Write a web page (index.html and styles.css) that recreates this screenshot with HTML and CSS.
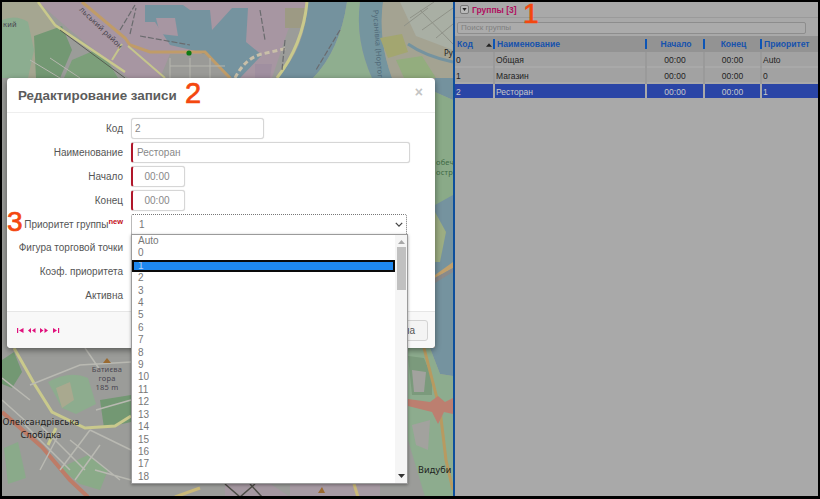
FILE: index.html
```html
<!DOCTYPE html>
<html lang="ru">
<head>
<meta charset="utf-8">
<title>Группы</title>
<link rel="stylesheet" href="styles.css">
</head>
<body>
<div class="frame">
  <div class="map">
    <svg class="map-art" viewBox="2 2 451 495" xmlns="http://www.w3.org/2000/svg">
      <rect x="2" y="2" width="451" height="495" fill="#9b9c99"/>
      <!-- top left -->
      <path d="M2 2H38L60 30L40 78H2Z" fill="#a5a691"/>
      <path d="M2 20Q16 14 28 22L34 50L28 78H2Z" fill="#8cad90"/>
      <path d="M34 36L62 26L72 50L60 78H36Z" fill="#739873"/>
      <path d="M72 60L100 48L118 78H64Z" fill="#7c9f7a"/>
      <path d="M38 2H132L125 30L230 78H128L70 30Z" fill="#a796a2"/>
      <path d="M78 2H310L288 30L272 78H205L150 52L128 45Z" fill="#a796a2"/>
      <path d="M145 5H183L190 10H210L212 30L232 8H248L246 42L262 55L240 78H232L200 52L170 45L155 22H145Z" fill="#75939f"/>
      <path d="M156 18H175L178 36L160 34Z" fill="#a796a2"/>
      <path d="M170 54H205L232 78H160Z" fill="#9a9a97"/>
      <path d="M285 8H305V28H285Z" fill="#9d9a84"/>
      <!-- river -->
      <path d="M308 2H347Q340 50 313 78H277Q305 50 308 2Z" fill="#74929e"/>
      <path d="M347 2H360Q355 40 372 78H313Q340 50 347 2Z" fill="#8fae8f"/>
      <path d="M360 2H383Q378 40 392 78H372Q355 40 360 2Z" fill="#75959f"/>
      <path d="M383 2H453V78H392Q378 40 383 2Z" fill="#a4a392"/>
      <path d="M400 2H453V50L416 36Z" fill="#a9afa4"/>
      <path d="M380 38L402 34L408 52L388 58Z" fill="#a3a670"/>
      <path d="M396 60L422 56L436 78H404Z" fill="#93ad7e"/>
      <path d="M408 44Q425 56 453 62" fill="none" stroke="#75939f" stroke-width="3"/>
      <path d="M420 10L453 44M410 18L434 2M422 30L453 8M436 38L453 24M404 26L428 8" stroke="#8f9288" stroke-width="1" fill="none"/>
      <path d="M307 2Q303 44 277 78" stroke="#c9c98c" stroke-width="3" fill="none"/>
      <path d="M235 78Q245 58 262 54L288 48" stroke="#c9bfa8" stroke-width="3" stroke-dasharray="5 3" fill="none"/>
      <path d="M255 64H272L270 78H255Z" fill="#a08fa0"/>
      <path d="M82 2L125 38L130 45L150 52H205L230 78" stroke="#c09c68" stroke-width="3" fill="none"/>
      <path d="M38 2L55 25L125 72" stroke="#c9c98c" stroke-width="2.5" fill="none"/>
      <path d="M122 44L112 60M128 46L165 78" stroke="#c5c58c" stroke-width="2" fill="none"/>
      <path d="M60 30L125 78" stroke="#4c4c46" stroke-width=".8" fill="none"/>
      <path d="M120 30L135 5M130 34L136 8M140 36L190 45M260 10L265 40M285 40L282 70M340 30L316 70" stroke="#6a6b6e" stroke-width="1.2" fill="none" stroke-dasharray="6 2"/>
      <path d="M170 58V78M190 58V78M210 58V78M170 66H225M30 60L60 78M50 58L80 78" stroke="#b6b6ae" stroke-width="1" fill="none"/>
      <!-- right strip -->
      <path d="M435 78H453V100L435 92Z" fill="#74929e"/>
      <path d="M435 92L453 100V195L435 215Z" fill="#8aaa88"/>
      <path d="M435 205L453 195V355H435Z" fill="#75939f"/>
      <path d="M435 212L446 232L440 262H435Z" fill="#9cad82"/>
      <path d="M435 275L453 262V268L435 278Z" fill="#c0a06c"/>
      <path d="M435 278L453 268V272L435 283Z" fill="#8a8a8a"/>
      <!-- bottom -->
      <path d="M2 348H453V497H2Z" fill="#9b9c99"/>
      <path d="M430 348H453V376L440 374Z" fill="#75939f"/>
      <path d="M408 348H430L440 374L453 376V497H425L408 440Z" fill="#8dac8e"/>
      <path d="M408 356L424 358L432 378V395L412 395Z" fill="#7b9a7c"/>
      <path d="M412 370L426 372L424 392H414Z" fill="#a2a29e"/>
      <path d="M2 360L14 352L22 372L12 388L2 384Z" fill="#739873"/>
      <path d="M48 382Q70 370 88 378L96 404L76 414L62 408Z" fill="#8dac8e"/>
      <path d="M56 388L70 382L74 400L62 408Z" fill="#a9a98f"/>
      <path d="M100 400L131 395V422L104 428Z" fill="#739873"/>
      <path d="M4 448L18 442L26 478L8 484Z" fill="#8aaa8a"/>
      <path d="M60 468L88 455L108 470L100 490L80 484Z" fill="#8aaa88"/>
      <path d="M2 412L42 447L70 480L88 497" stroke="#bd7c68" stroke-width="4" fill="none"/>
      <path d="M14 348L35 385L52 412L85 428L115 426L131 416" stroke="#c9c98c" stroke-width="3" fill="none"/>
      <path d="M48 445L56 428" stroke="#c9c98c" stroke-width="3" fill="none"/>
      <path d="M20 420L70 470M35 420L85 470M90 430L60 470M90 430L131 450M100 445L75 480M95 470L131 480M70 440L120 480M60 432L40 470M2 400L30 425" stroke="#b9b9b2" stroke-width="1.5" fill="none"/>
      <path d="M30 385L80 365L131 362M85 348L100 370M2 378L30 400M96 410L131 400" stroke="#b9b9b2" stroke-width="1.5" fill="none"/>
      <path d="M424 348L440 410L446 460L453 490" stroke="#b89a60" stroke-width="3" fill="none"/>
      <path d="M408 399L430 402L438 396L445 402L453 398V414L444 412L438 424L432 412L408 406Z" fill="#bc7f70"/>
      <path d="M412 425L430 420L428 450L416 445Z" fill="#a2a29e"/>
      <path d="M225 484L250 470L290 497H225Z" fill="#a497a0"/>
      <path d="M290 484H380V497H290Z" fill="#a79aa3"/>
      <path d="M225 484L240 497M250 484L262 497M255 484L240 497" stroke="#4c4c46" stroke-width="1.5" fill="none"/>
      <path d="M354 484L358 497M200 488L175 497" stroke="#c9b878" stroke-width="3" fill="none"/>
      <circle cx="189" cy="53" r="2.6" fill="#0b7a12"/>
      <path d="M103 363L107 358L111 363Z" fill="#9a6a30"/>
      <path d="M318 493L322 487L325 493Z" fill="#9a6a30"/>
      <text class="map-label" x="107" y="372" text-anchor="middle">Батиєва</text>
      <text class="map-label" x="107" y="381" text-anchor="middle">гора</text>
      <text class="map-label" x="107" y="390" text-anchor="middle">185 m</text>
      <text class="map-town" x="41" y="425" text-anchor="middle">Олександрівська</text>
      <text class="map-town" x="41" y="438" text-anchor="middle">Слобідка</text>
      <text class="map-town" x="418" y="473">Видуби</text>
      <text class="map-town ru-label" x="444" y="56">Ру</text>
      <text class="map-label green-label" x="436" y="165">обеч</text>
      <text class="map-label green-label" x="436" y="175">остр</text>
      <text class="map-label" x="3" y="27">кий</text>
      <text class="map-label" transform="translate(79 10) rotate(44)">льський район</text>
      <text class="map-label river-label" transform="translate(373 10) rotate(86)">Русанівка (Нортогрій)</text>
    </svg>
  </div>

  <div class="divider"></div>

  <section class="panel">
    <div class="panel-head">
      <span class="toggle"><svg viewBox="0 0 7 5" width="7" height="5"><path d="M0 0H7L3.5 5Z" fill="#222"/></svg></span>
      <span class="panel-title">Группы [3]</span>
    </div>
    <div class="panel-search"><span class="search-box">Поиск группы</span></div>
    <div class="grid grid-head">
      <div class="th first">Код<svg class="sort" viewBox="0 0 7 4" width="6" height="4"><path d="M3.5 0L7 4H0Z" fill="#222"/></svg></div>
      <div class="th">Наименование</div>
      <div class="th mid">Начало</div>
      <div class="th mid">Конец</div>
      <div class="th">Приоритет</div>
    </div>
    <div class="grid row"><div>0</div><div>Общая</div><div class="mid">00:00</div><div class="mid">00:00</div><div>Auto</div></div>
    <div class="grid row"><div>1</div><div>Магазин</div><div class="mid">00:00</div><div class="mid">00:00</div><div>0</div></div>
    <div class="grid row selected"><div>2</div><div>Ресторан</div><div class="mid">00:00</div><div class="mid">00:00</div><div>1</div></div>
  </section>

  <div class="modal">
    <header class="modal-head">
      <h1 class="modal-title">Редактирование записи</h1>
      <span class="modal-close">×</span>
    </header>
    <div class="modal-body">
      <div class="field"><label class="field-label">Код</label><span class="input w-code">2</span></div>
      <div class="field"><label class="field-label">Наименование</label><span class="input req w-name">Ресторан</span></div>
      <div class="field"><label class="field-label">Начало</label><span class="input req w-time">00:00</span></div>
      <div class="field"><label class="field-label">Конец</label><span class="input req w-time">00:00</span></div>
      <div class="field"><label class="field-label">Приоритет группы<sup class="new">new</sup></label>
        <span class="input select w-select">1<svg class="chev" viewBox="0 0 10 6" width="8" height="5"><path d="M1 1L5 5L9 1" fill="none" stroke="#444" stroke-width="1.6"/></svg></span></div>
      <div class="field field-after-select"><label class="field-label">Фигура торговой точки</label></div>
      <div class="field"><label class="field-label">Коэф. приоритета</label></div>
      <div class="field"><label class="field-label">Активна</label></div>
    </div>
    <footer class="modal-foot">
      <svg class="pager" viewBox="0 0 43 5" width="43" height="5">
        <path fill="#e0107c" d="M0 0H1.2V5H0ZM6.5 0V5L2 2.5ZM14 0V5L11 2.5ZM18.500 0V5L15 2.500ZM23 0L26.500 2.500L23 5ZM27.500 0L31 2.500L27.500 5ZM36 0L40 2.500L36 5ZM41 0H42.200V5H41Z"/>
      </svg>
      <span class="btn">Отмена</span>
    </footer>
  </div>

  <div class="dropdown">
    <ul class="options">
      <li>Auto</li><li>0</li><li class="active">1</li><li>2</li><li>3</li><li>4</li><li>5</li><li>6</li><li>7</li><li>8</li><li>9</li><li>10</li><li>11</li><li>12</li><li>13</li><li>14</li><li>15</li><li>16</li><li>17</li><li>18</li>
    </ul>
    <div class="scrollbar">
      <svg viewBox="0 0 7 4" width="7" height="4"><path d="M3.5 0L7 4H0Z" fill="#a8a8a8"/></svg>
      <div class="thumb"></div>
      <svg class="down" viewBox="0 0 7 4" width="7" height="4"><path d="M0 0H7L3.5 4Z" fill="#333"/></svg>
    </div>
  </div>

  <span class="mark mark-1">1</span>
  <span class="mark mark-2">2</span>
  <span class="mark mark-3">3</span>
</div>
</body>
</html>
```
FILE: styles.css
```css
* { box-sizing: border-box; }
html, body { margin: 0; padding: 0; background: #000; }
body { width: 820px; height: 499px; overflow: hidden; font-family: "Liberation Sans", Arial, sans-serif; }

.frame {
  position: relative;
  width: 820px;
  height: 499px;
  border-style: solid;
  border-color: #000;
  border-width: 2px 2px 3px 2px;
  display: flex;
  overflow: hidden;
}

.map { width: 451px; flex: none; background: #9b9c99; overflow: hidden; }
.map-art { display: block; width: 451px; height: 495px; }
.map-label { font: 7.5px "Noto Sans", sans-serif; fill: #4a4650; letter-spacing: .2px; }
.green-label { fill: #3f6a45; }
.river-label { fill: #4f6877; }
.map-town { font: 9px "Noto Sans", sans-serif; fill: #1d1d1d; letter-spacing: .2px; }
.ru-label { font-size: 8px; letter-spacing: 0; }

.divider { width: 2px; flex: none; background: #0d4f9c; }

.panel { flex: 1; background: #a9a9a9; font-size: 8.5px; color: #222; }
.panel-head { height: 16px; display: flex; align-items: center; gap: 3px; padding-left: 5px; border-bottom: 1px solid #9a9a9a; }
.toggle { width: 9px; height: 9px; background: #b9b9b9; border: 1px solid #777; border-radius: 2px; display: flex; align-items: center; justify-content: center; }
.toggle svg { width: 5px; height: 3px; }
.panel-title { color: #b01060; font-weight: bold; font-size: 8.5px; }
.panel-search { height: 18px; padding: 4px 12px 2px 2px; }
.search-box { display: block; height: 12px; line-height: 10px; padding-left: 3px; border: 1px solid #8d8d8d; border-radius: 2px; color: #808080; font-size: 8px; background: #ababab; }
.grid { display: grid; grid-template-columns: 38px 152px 58px 57px 1fr; }
.grid-head { height: 16px; background: #939393; align-items: center; }
.th { color: #1652ad; font-weight: bold; font-size: 8.6px; padding-left: 2px; height: 10px; line-height: 10px; border-left: 2px solid #0d55b5; }
.th.first { border-left: 0; display: flex; justify-content: space-between; align-items: center; padding: 0 1px 0 2px; }
.th.mid { text-align: center; }
.sort { margin-top: 2px; }
.row { height: 16px; line-height: 16px; border-bottom: 2px solid #a9a9a9; background: #a2a2a2; }
.row > div { padding-left: 1px; border-left: 2px solid #9a9a9a; }
.row > div:first-child { border-left: 0; }
.mid { text-align: center; }
.row > .mid { padding-left: 0; }
.selected { background: #2a45a6; color: #c9c9c9; }
.selected > div { border-left-color: #a9a9a9; }

.modal {
  position: absolute;
  left: 5px;
  top: 76px;
  width: 428px;
  height: 270px;
  background: #fff;
  border-radius: 4px;
  box-shadow: 0 2px 6px rgba(0,0,0,.45);
  display: flex;
  flex-direction: column;
  color: #555;
}
.modal-head { height: 35px; flex: none; display: flex; align-items: flex-start; justify-content: space-between; padding: 0 11px; border-bottom: 1px solid #eee; }
.modal-title { margin: 9px 0 0 0; font-size: 13.4px; line-height: 17px; font-weight: bold; color: #5c5c5c; }
.modal-close { font-size: 14px; font-weight: bold; color: #c4c4c4; line-height: 14px; margin: 7px 1px 0 0; }
.modal-body { flex: 1; padding-top: 3px; }
.field { height: 24px; display: flex; align-items: center; font-size: 10px; }
.field-after-select { margin-top: -1px; }
.field-label { width: 116px; flex: none; text-align: right; color: #555; white-space: nowrap; }
.new { color: #c4101a; font-weight: bold; font-size: 7.5px; line-height: 0; vertical-align: 4px; }
.input { display: block; margin-left: 8px; height: 21px; line-height: 17px; border: 1px solid #d6d6d6; border-radius: 3px; padding: 1px 3px; font-size: 10px; color: #888; background: #fff; box-shadow: 0 0 1px #ccc; }
.req { border-left: 2px solid #b0162a; padding-left: 4px; }
.w-code { width: 133px; }
.w-name { width: 279px; }
.w-time { width: 54px; text-align: center; padding-left: 0; }
.w-select { width: 276px; position: relative; border: 1px dotted #777; border-radius: 2px; padding-left: 7px; color: #777; box-shadow: none; }
.chev { position: absolute; right: 3px; top: 7px; }
.modal-foot { height: 37px; flex: none; background: #f8f8f8; border-top: 1px solid #e6e6e6; border-radius: 0 0 4px 4px; display: flex; align-items: center; justify-content: space-between; padding: 0 7px 0 10px; }
.pager { display: block; }
.btn { height: 21px; line-height: 19px; border: 1px solid #d3d3d3; border-radius: 3px; padding: 0 12px 0 8px; font-size: 10px; color: #555; background: #f4f4f4; }

.dropdown {
  position: absolute;
  left: 129px;
  top: 232px;
  width: 277px;
  height: 250px;
  background: #fff;
  border: 1px solid #9b9b9b;
  box-shadow: 0 1px 3px rgba(0,0,0,.35);
  display: flex;
}
.options { list-style: none; margin: 0; padding: 0; flex: 1; font-size: 10px; color: #777; }
.options li { height: 12.42px; line-height: 11.5px; padding-left: 6px; }
.options .active { position: relative; background: #1e88f0; color: #b4d4f5; outline: 2px solid #0a0a0a; outline-offset: -2px; line-height: 12.4px; }
.scrollbar { width: 12px; flex: none; background: #f5f5f5; display: flex; flex-direction: column; align-items: center; padding-top: 5px; position: relative; }
.thumb { width: 9px; height: 43px; margin-top: 3px; background: #c0c0c0; }
.down { position: absolute; bottom: 5px; }

.mark { position: absolute; color: #f4470f; line-height: 1; -webkit-text-stroke: .7px #f4470f; }
.mark-1 { left: 521px; top: 1px; font-size: 28px; line-height: 22px; }
.mark-2 { left: 183px; top: 77px; font-size: 29px; }
.mark-3 { left: 5px; top: 206px; font-size: 28px; }
```
